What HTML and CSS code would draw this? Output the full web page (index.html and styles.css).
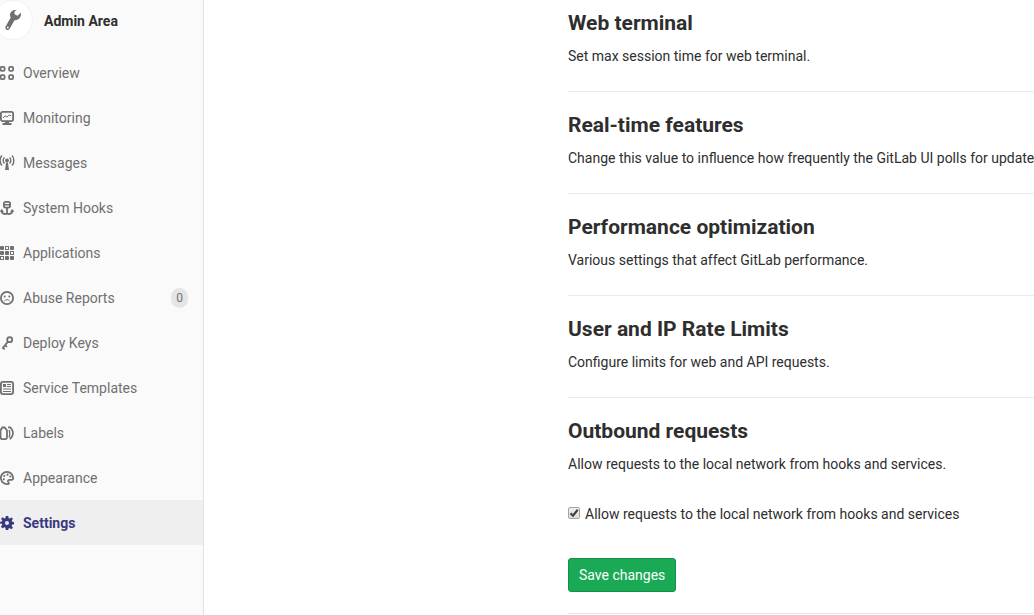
FILE: index.html
```html
<!DOCTYPE html>
<html lang="en">
<head>
<meta charset="utf-8">
<title>Settings · Admin Area</title>
<link rel="stylesheet" href="styles.css">
</head>
<body>
<div class="layout">
  <aside class="sidebar">
    <a class="context" href="#">
      <span class="avatar"><svg viewBox="0 0 16 22" width="16" height="22" aria-hidden="true"><path fill="#707070" d="M11.500 1C8 .5 5 2.700 5 6c0 1 .2 1.700.7 2.500L.9 17c-1 1.500-.7 3 .5 3.700 1.300.7 2.700.2 3.400-1.200l4.700-8.300c3.400.3 6.200-2 6.500-5.700V3.800l-3.600 3-2.800-1.600-.2-2.500zM2.800 17.600a.9.900 0 1 1 0 1.800.9.9 0 0 1 0-1.800z"/></svg></span>
      <span class="context-title">Admin Area</span>
    </a>
    <nav>
      <ul class="nav">
        <li><a class="item" href="#"><svg class="icon" viewBox="0 0 14 14"><g class="line"><rect x=".6" y=".9" width="4" height="4" rx="1.200"/><rect x="9.100" y=".9" width="4" height="4" rx="1.200"/><rect x=".6" y="9.100" width="4" height="4" rx="1.200"/><rect x="9.100" y="9.100" width="4" height="4" rx="1.200"/></g></svg><span>Overview</span></a></li>
        <li><a class="item" href="#"><svg class="icon" viewBox="0 0 14 14"><rect class="line" x=".9" y=".9" width="12.200" height="9.200" rx="1.800"/><path class="thin" d="M3 7 5 4.800l2 1.200 2.200-2L11 4.700"/><path d="M5 10h4v2h2.500v2h-9v-2H5z"/></svg><span>Monitoring</span></a></li>
        <li><a class="item" href="#"><svg class="icon wide" viewBox="0 0 15 15"><circle cx="7" cy="5.500" r="1.900"/><path d="M6.100 7.500h1.800L9 15H5z"/><path class="medium" d="M4.500 2.500a4 4 0 0 0 0 6M9.500 2.500a4 4 0 0 1 0 6M2 .5C-.5 3-.5 8 2 10.500M12 .5c2.500 2.500 2.500 7.500 0 10"/></svg><span>Messages</span></a></li>
        <li><a class="item" href="#"><svg class="icon" viewBox="0 0 14 14"><rect class="line" x="3.900" y=".9" width="6.200" height="5.700" rx="1.800"/><path d="M3.500 3h7v1.500h-7z"/><path class="line" d="M7 6.500V12M1.700 9.500c0 2.200 1.300 3.500 3.100 3.500 1.200 0 2.200-.5 2.200-1.300 0 .8 1 1.300 2.200 1.300 1.800 0 3.100-1.300 3.100-3.500"/><path d="M-.3 10.700 1.700 8l2.300 2.700zM14.300 10.700l-2-2.700-2.300 2.700z"/></svg><span>System Hooks</span></a></li>
        <li><a class="item" href="#"><svg class="icon" viewBox="0 0 14 14"><rect width="4" height="4" rx="1"/><rect x="10" width="4" height="4" rx="1"/><rect y="5" width="4" height="4" rx="1"/><rect x="5" y="5" width="4" height="4" rx="1"/><rect x="5" y="10" width="4" height="4" rx="1"/><rect x="10" y="10" width="4" height="4" rx="1"/><g class="thin"><rect x="5.500" y=".5" width="3" height="3"/><rect x="10.500" y="5.500" width="3" height="3"/><rect x=".5" y="10.500" width="3" height="3"/></g></svg><span>Applications</span></a></li>
        <li><a class="item" href="#"><svg class="icon" viewBox="0 0 14 14"><circle class="line" cx="7" cy="7" r="6.100"/><circle cx="4.700" cy="5.600" r="1"/><circle cx="9.300" cy="5.600" r="1"/><path class="thin" d="M4.500 10.300C5 8.200 9 8.200 9.500 10.300"/></svg><span>Abuse Reports</span><span class="badge">0</span></a></li>
        <li><a class="item" href="#"><svg class="icon" viewBox="0 0 14 14"><circle class="line" cx="9.700" cy="3.700" r="2.500"/><path class="line" d="M8 5.700 2.300 12.500M4.700 9l2.300 1.900M2.500 11.300l2.200 1.900"/></svg><span>Deploy Keys</span></a></li>
        <li><a class="item" href="#"><svg class="icon" viewBox="0 0 14 14"><rect class="line" x=".9" y=".9" width="12.200" height="12.200" rx="2"/><path d="M3 3h3v3H3zM7 3h4v1H7zM7 5h4v1H7zM3 7.500h8v1H3zM3 10h8v1H3z"/></svg><span>Service Templates</span></a></li>
        <li><a class="item" href="#"><svg class="icon" viewBox="0 0 14 14"><path class="line" d="M.5 4.500 2.300 1.500h2.400L7 4.500v6c0 1.500-.5 2.600-1.700 2.600H2C.8 13.100.5 12 .5 10.500z"/><path class="line" d="M8 1.300h2.200c2.800 2.500 3.700 6.500 1.500 9.700L10 13.300"/><path class="medium" d="M9.300 4c.8 2.800.5 5.200 0 7.500"/></svg><span>Labels</span></a></li>
        <li><a class="item" href="#"><svg class="icon" viewBox="0 0 14 14"><path class="line" d="M7 .9a6.100 6.100 0 1 0 1.500 12c1-.3 0-1.500-.4-2.300-.4-1 .3-1.800 1.500-1.800h2c1 0 1.500-.6 1.500-1.800A6.100 6.100 0 0 0 7 .9z"/><circle cx="4.300" cy="5" r="1.100"/><circle cx="7.500" cy="3.700" r="1.100"/><circle cx="10.300" cy="5.500" r="1.100"/><circle cx="3.800" cy="8.300" r="1.100"/></svg><span>Appearance</span></a></li>
        <li><a class="item active" href="#" aria-current="page"><svg class="icon" viewBox="0 0 14 14"><path fill-rule="evenodd" d="M5.800 0h2.400l.5 2.300.8.3 2-1.200 1.400 1.400-1.100 2 .3.900 1.900.4v2.200l-2 .5-.4 1 1.300 1.900-1.600 1.600-1.900-1.200-.8.300L8.200 14H5.800l-.5-2.500-.9-.3-1.900 1.100L.9 10.700l1.300-1.900-.4-1L0 7.600V5.800l1.900-.4.3-.9-1.100-1.800 1.500-1.500 1.900 1.300.8-.3zM7 5a2 2 0 1 0 0 4 2 2 0 0 0 0-4z"/></svg><span>Settings</span></a></li>
      </ul>
    </nav>
  </aside>
  <main class="content">
    <section class="settings">
      <h2>Web terminal</h2>
      <p>Set max session time for web terminal.</p>
    </section>
    <section class="settings">
      <h2>Real-time features</h2>
      <p>Change this value to influence how frequently the GitLab UI polls for updates.</p>
    </section>
    <section class="settings">
      <h2>Performance optimization</h2>
      <p>Various settings that affect GitLab performance.</p>
    </section>
    <section class="settings">
      <h2>User and IP Rate Limits</h2>
      <p>Configure limits for web and API requests.</p>
    </section>
    <section class="settings expanded">
      <h2>Outbound requests</h2>
      <p>Allow requests to the local network from hooks and services.</p>
      <form class="form">
        <div class="check">
          <input type="checkbox" id="allow-local" checked>
          <label for="allow-local">Allow requests to the local network from hooks and services</label>
        </div>
        <button class="save" type="button">Save changes</button>
      </form>
    </section>
  </main>
</div>
</body>
</html>
```
FILE: styles.css
```css
* {
  box-sizing: border-box;
}

body {
  margin: 0;
  background: #fff;
  color: #2e2e2e;
  font: 14px/20px Roboto, "Noto Sans", sans-serif;
  overflow: hidden;
}

.layout {
  display: grid;
  grid-template-columns: 204px minmax(0, 1fr);
  min-height: 100vh;
}

.sidebar {
  background: #fafafa;
  border-right: 1px solid #e1e1e1;
}

.sidebar a {
  color: #707070;
  text-decoration: none;
}

.sidebar .context {
  display: flex;
  align-items: flex-start;
  gap: 11px;
  height: 50px;
  margin-left: -7px;
  color: #2e2e2e;
  font-weight: 700;
}

.context-title {
  padding-top: 11px;
}

.avatar {
  display: flex;
  align-items: center;
  justify-content: center;
  width: 40px;
  height: 40px;
  border: 1px solid #f2f2f2;
  border-radius: 50%;
  background: #fff;
}

.nav {
  list-style: none;
  margin: 0;
  padding: 0;
}

.item {
  display: flex;
  align-items: center;
  height: 45px;
  padding-right: 15px;
}

.sidebar .active {
  background: #efefef;
  color: #393982;
  font-weight: 700;
}

.icon {
  width: 14px;
  height: 14px;
  margin-right: 9px;
  fill: currentColor;
}

.wide {
  width: 15px;
  height: 15px;
  margin-right: 8px;
}

.line,
.medium,
.thin {
  fill: none;
  stroke: currentColor;
  stroke-width: 1.8;
}

.medium {
  stroke-width: 1.4;
}

.thin {
  stroke-width: 1;
}

.badge {
  margin-left: auto;
  padding: 0 5px;
  border-radius: 10px;
  background: #e5e5e5;
  font-size: 12px;
}

.content {
  padding-left: 364px;
}

.settings {
  padding: 20px 0 25px;
  border-bottom: 1px solid #eaeaea;
  white-space: nowrap;
}

.settings:first-child {
  padding-top: 10px;
}

.expanded {
  padding-bottom: 21px;
}

h2 {
  margin: 0 0 10px;
  font-size: 21px;
  line-height: 26px;
  font-weight: 700;
}

p {
  margin: 0;
}

.form {
  margin-top: 30px;
}

.check {
  display: flex;
  align-items: center;
  gap: 5px;
  margin-bottom: 34px;
}

.check input {
  appearance: none;
  width: 12px;
  height: 12px;
  margin: 0 0 2px;
  border: 1px solid #a5a5a5;
  border-radius: 2px;
  background: url("data:image/svg+xml,%3Csvg xmlns='http://www.w3.org/2000/svg' viewBox='0 0 10 10'%3E%3Cpath d='M1.500 5.200 4 7.700 8.700 1.800' fill='none' stroke='%23404040' stroke-width='2.200'/%3E%3C/svg%3E") center / 10px 10px no-repeat, linear-gradient(#eee, #ddd);
}

.save {
  display: block;
  height: 34px;
  padding: 0 10px;
  border: 1px solid #168f48;
  border-radius: 3px;
  background: #1aaa55;
  color: #fff;
  font: inherit;
}
```
